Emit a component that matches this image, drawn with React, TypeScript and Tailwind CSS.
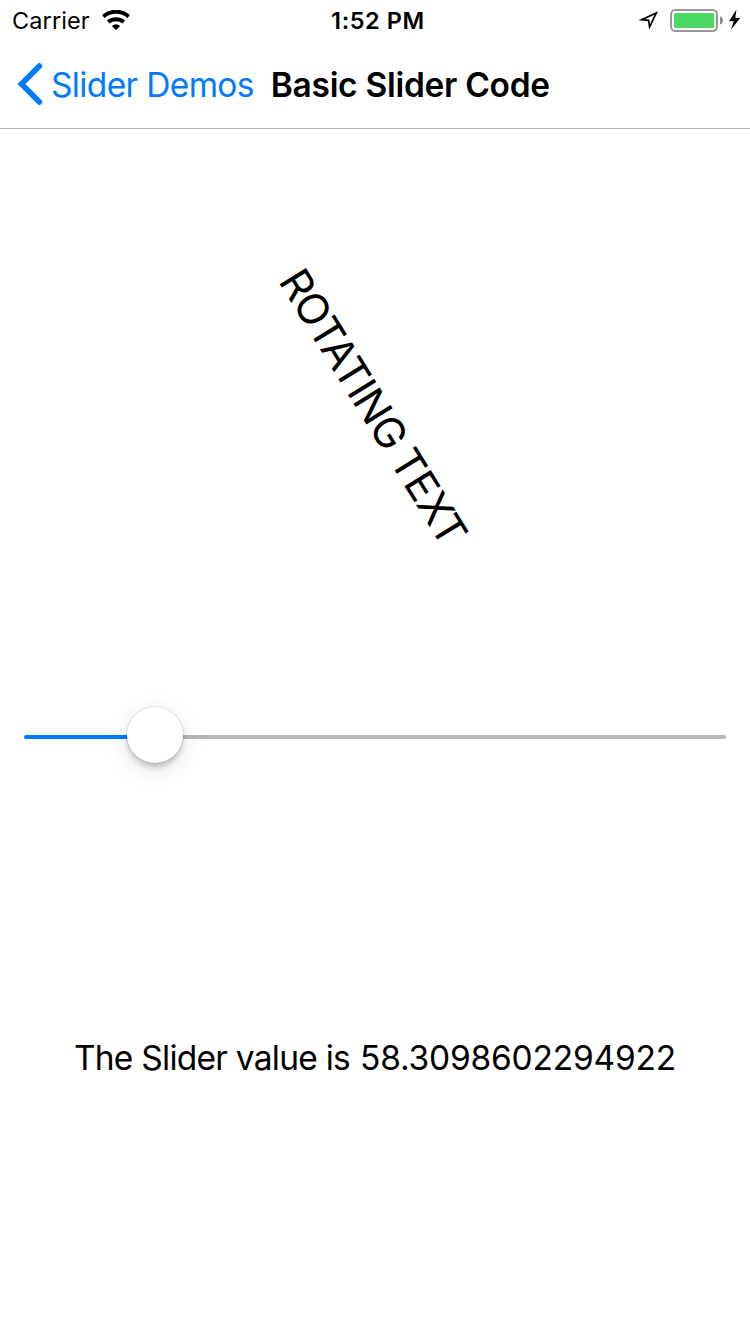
const SLIDER_VALUE = 58.3098602294922;

function WifiIcon() {
  return (
    <svg className="-mt-0.5" width="28" height="20" viewBox="0 0 28 20" fill="none" stroke="black" strokeWidth="4">
      <path d="M1.3 6.4a19.5 19.5 0 0 1 25.4 0M6.2 12a12.2 12.2 0 0 1 15.6 0" />
      <path d="M14 20l-4.2-3.9a6.5 6.5 0 0 1 8.4 0z" fill="black" stroke="none" />
    </svg>
  );
}

function StatusIcons() {
  return (
    <svg className="-mt-0.5 shrink-0" width="106" height="26" viewBox="0 0 106 26" fill="none">
      <path d="M3.6 12.7L18.3 5.9L11.6 20L10.6 13.4Z" stroke="black" strokeWidth="1.7" />
      <rect x="33" y="3" width="46" height="21" rx="4.5" stroke="#999" strokeWidth="2" />
      <rect x="36" y="6" width="40.2" height="15" rx="1.5" fill="#4cd964" />
      <path d="M82 9.2c4 1.5 4 7 0 8.4z" fill="#888" />
      <path d="M98.4 2.6L91 14.2h4.8l-2.8 8.6L102.2 10.9h-4.9z" fill="black" />
    </svg>
  );
}

function Slider() {
  return (
    <div className="flex h-[58px] items-center px-6">
      <div className="mt-[3px] h-1 w-[104px] rounded-l-full bg-[#007aff]" />
      <div className="relative -ml-px size-14 shrink-0 rounded-full bg-white shadow-[0_0_0_1px_rgba(0,0,0,0.08),0_5px_5px_rgba(0,0,0,0.17),0_6px_24px_rgba(0,0,0,0.11)]" />
      <div className="mt-[3px] h-1 flex-1 rounded-r-full bg-[#b7b7b7]" />
    </div>
  );
}

export default function App() {
  return (
    <div className="flex h-[1334px] w-[750px] flex-col overflow-hidden bg-white font-['Inter',sans-serif] text-black">
      <header className="flex h-[129px] flex-col border-b border-[#b2b2b2]">
        <div className="grid h-10 grid-cols-3 items-center pt-0.5 pl-3 pr-1.5 text-[23.5px]">
          <div className="flex items-center gap-[12px]">
            <span className="whitespace-nowrap tracking-[0.1px]">Carrier</span>
            <WifiIcon />
          </div>
          <span className="whitespace-nowrap text-center font-semibold tracking-[0.6px]">1:52 PM</span>
          <div className="flex justify-end">
            <StatusIcons />
          </div>
        </div>
        <div className="flex h-[88px] items-center pl-[17px] text-[33.5px]">
          <svg width="26" height="42" viewBox="0 0 26 42" fill="none" stroke="#007aff" strokeWidth="5.6" strokeLinecap="round" strokeLinejoin="miter">
            <path d="M22.4 3L4.5 21L22.4 39" />
          </svg>
          <span className="ml-2 mt-0.5 whitespace-nowrap tracking-[-0.65px] text-[#007aff]">Slider Demos</span>
          <h1 className="ml-[17px] mt-0.5 whitespace-nowrap font-semibold tracking-[-0.3px]">Basic Slider Code</h1>
        </div>
      </header>
      <main className="flex flex-1 flex-col">
        <div className="flex h-[555px] items-center justify-center pr-[3px]">
          <span className="rotate-[58.31deg] whitespace-nowrap text-[42.4px] tracking-[-1px] [word-spacing:-2px]">ROTATING TEXT</span>
        </div>
        <div className="mt-[22px]">
          <Slider />
        </div>
        <p className="mt-[269px] flex justify-center gap-[10px] whitespace-nowrap text-[33.5px]">
          <span className="tracking-[-0.75px]">The Slider value is</span>
          <span className="tracking-[-0.2px]">{SLIDER_VALUE}</span>
        </p>
      </main>
    </div>
  );
}
